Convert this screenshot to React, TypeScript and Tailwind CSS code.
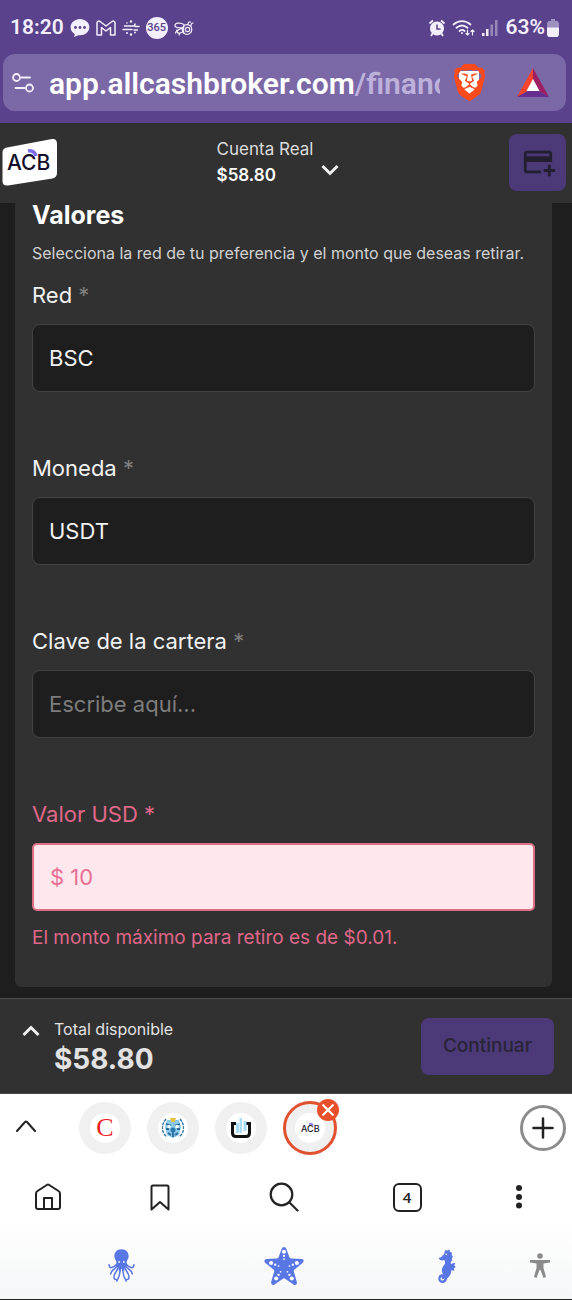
import { useState } from "react";
import type { ReactNode } from "react";
import { MdAddCard } from "react-icons/md";
import { SiBrave } from "react-icons/si";

// Withdrawal form of the broker app, shown inside the mobile browser shell:
// system status bar, address bar, page, tab strip, toolbar, nav bar.

export default function App() {
  return (
    <div className="flex w-full flex-col bg-[#1e1e1e] font-['Inter',sans-serif]">
      <div className="bg-[#5a428c] px-[3px] pb-3">
        <StatusBar />
        <AddressBar />
      </div>
      <AccountHeader />
      <WithdrawForm />
      <TotalBar />
      <div className="border-b border-[#222] bg-gradient-to-b from-white from-60% to-[#f6f7f8]">
        <TabStrip />
        <Toolbar />
        <SystemNav />
      </div>
    </div>
  );
}

function StatusBar() {
  return (
    <div className="flex h-[54px] items-center justify-between pl-[7px] pr-[10px] pt-0.5 font-['Roboto',sans-serif] text-[21px] font-semibold text-[#f4effc]">
      <div className="flex items-center gap-1.5">
        <span>18:20</span>
        <svg viewBox="0 0 20 20" className="size-5">
          <path d="M10 1C4.800 1 .6 4.600.6 9.300c0 3 1.700 5.400 4.200 6.900L4 19l4.300-1.800c5.800.9 11.100-3 11.100-7.900C19.400 4.600 15.200 1 10 1z" fill="currentColor" />
          <g fill="#5a428c">
            <circle cx="5.500" cy="9.500" r="1.400" />
            <circle cx="10" cy="9.500" r="1.400" />
            <circle cx="14.500" cy="9.500" r="1.400" />
          </g>
        </svg>
        <svg viewBox="0 0 20 16" className="h-4 w-5" fill="none" stroke="currentColor" strokeWidth="1.500" strokeLinejoin="round">
          <path d="M1 15V2.500Q2 .2 4 1.500L10 6l6-4.500Q18 .2 19 2.500V15h-4.500V7.500L10 11 5.500 7.500V15z" />
        </svg>
        <svg viewBox="0 0 18 18" className="size-[18px]" fill="none" stroke="currentColor" strokeWidth="1.500" strokeLinecap="round">
          <path d="M2.500 7H11q2 0 2-2M1 10.500h9M13 7.500h4M12 11h3.500" />
          <g fill="currentColor" stroke="none">
            <circle cx="9" cy="2.500" r="1.200" />
            <circle cx="5" cy="4" r=".8" />
            <circle cx="5" cy="14" r="1" />
            <circle cx="9" cy="15.500" r="1.200" />
            <circle cx="13" cy="13.500" r=".9" />
          </g>
        </svg>
        <span className="flex size-[22px] items-center justify-center rounded-full bg-[#f4effc] text-[11px] font-medium text-[#5a428c]">
          365
        </span>
        <svg viewBox="0 0 20 16" className="h-4 w-5" fill="none" stroke="currentColor" strokeWidth="1.200" strokeLinecap="round">
          <path d="M10 4.500C6 2 1 3 1 5.500s4 2.500 8 2M8.500 8c-3 1-6.500 3-5 4.500S8 12.500 9.500 11.500M3 10l-1.500 3M6 13l-1 2" />
          <circle cx="13" cy="9.500" r="4.800" />
          <circle cx="13.500" cy="9.500" r="2.200" />
          <path d="M10 5.500c-1 3-1 5 0 8M14 4.500c0-2 1-3 2.500-2.500M17 6c0-2 .5-3 2-3" />
        </svg>
      </div>
      <div className="flex items-center gap-1.5">
        <svg viewBox="0 0 18 18" className="size-[18px]">
          <circle cx="9" cy="9.500" r="7" fill="currentColor" />
          <path d="M1.500 4.500 5 1.500M16.500 4.500 13 1.500M4.500 14.500 3 17M13.500 14.500 15 17" stroke="currentColor" strokeWidth="1.800" />
          <path d="M9 5.500V10h3.500" fill="none" stroke="#5a428c" strokeWidth="1.500" />
        </svg>
        <svg viewBox="0 0 24 18" className="h-[18px] w-6" fill="none" stroke="currentColor" strokeWidth="1.800" strokeLinecap="round">
          <path d="M1.500 5.500c5-4.600 12-4.600 17 0M4.500 8.800c3.500-3 7.500-3 11 0M7.500 12c2-1.500 3.500-1.500 5 0" />
          <circle cx="10" cy="14" r="1" fill="currentColor" stroke="none" />
          <path d="M15.500 11v5m-1.500-1.500 1.500 1.500 1.500-1.500M20.500 16v-5m-1.500 1.500 1.500-1.500 1.500 1.500" strokeWidth="1.200" />
        </svg>
        <svg viewBox="0 0 16 18" className="h-[18px] w-4" fill="currentColor">
          <rect x="0" y="14" width="2.500" height="3" />
          <rect x="4" y="10" width="2.500" height="7" />
          <rect x="8.500" y="5.500" width="2.500" height="11.500" opacity=".4" />
          <rect x="13" y="1" width="2.500" height="16" opacity=".4" />
        </svg>
        <span className="flex items-center gap-0.5 pl-0.5">
          63%
          <svg viewBox="0 0 12 18" className="h-[18px] w-3" fill="currentColor">
            <path d="M4 0h4v2h2.500L12 4v5H0V4l1.500-2H4z" opacity=".45" />
            <path d="M0 8.500h12V16l-1.500 2h-9L0 16z" />
          </svg>
        </span>
      </div>
    </div>
  );
}

function AddressBar() {
  return (
    <div className="mr-[3px] flex h-[57px] items-center rounded-xl bg-[#7b68a7] pl-[9px] pr-[17px]">
      <button type="button" aria-label="Site settings" className="text-[#f4effc]">
        <svg viewBox="0 0 22 22" className="size-[22px]" fill="none" stroke="currentColor" strokeWidth="1.800" strokeLinecap="round">
          <circle cx="4.500" cy="5.500" r="3.500" />
          <path d="M9.500 5.500H18" />
          <circle cx="17.500" cy="16" r="3.500" />
          <path d="M3.500 16h9" />
        </svg>
      </button>
      <button
        type="button"
        className="ml-[15px] min-w-0 flex-1 overflow-hidden whitespace-nowrap pt-0.5 text-left font-['Roboto',sans-serif] text-[30px] font-semibold leading-10 text-white"
      >
        app.allcashbroker.com<span className="text-[#bdb1dc]">/financ</span>
      </button>
      <button type="button" aria-label="Brave Shields" className="relative ml-[13px] flex h-9 w-8 items-center justify-center">
        <span className="absolute h-6 w-5 rounded-b-full bg-white" />
        <SiBrave className="relative size-[37px] shrink-0 text-[#fb4a1c]" />
      </button>
      <button type="button" aria-label="Brave Rewards" className="ml-8">
        <svg viewBox="0 0 32 29" className="h-[29px] w-8">
          <path d="M16 0 0 29l11-6 5-11z" fill="#f4442e" />
          <path d="M16 0v12l6 11 10 6z" fill="#9e1f63" />
          <path d="M0 29h32l-10-6H11z" fill="#662d91" />
          <path d="M16 11 9.500 23h13z" fill="#fff" />
        </svg>
      </button>
    </div>
  );
}

function AccountHeader() {
  return (
    <header className="grid h-20 grid-cols-[1fr_auto_1fr] items-center bg-[#313131] pb-0.5 pl-0.5 pr-1.5">
      <a href="#" aria-label="ACB">
        <svg viewBox="0 0 56 48" className="h-12 w-14">
          <path d="M5 9.500 50 1q5-.7 5 5v29q0 4.500-4.500 5.400L6 47.500q-5.500.7-5.500-4.500V14.500Q.5 10.300 5 9.500z" fill="#fff" />
          <text x="5" y="32" className="font-['Inter',sans-serif] text-[21px] font-medium" fill="#14102b">ACB</text>
          <path d="M26 13q6-1 8 5" fill="none" stroke="#7b6cf0" strokeWidth="3.500" />
        </svg>
      </a>
      <button type="button" className="flex items-end gap-2 pr-3 text-left">
        <span className="flex flex-col">
          <span className="text-[17px] leading-[26px] text-[#dcdcdc]">Cuenta Real</span>
          <span className="text-[17px] font-semibold leading-[26px] text-white">$58.80</span>
        </span>
        <Chevron className="mb-3" />
      </button>
      <button
        type="button"
        aria-label="Depositar"
        className="flex size-[57px] items-center justify-center justify-self-end rounded-lg bg-[#4c3a78] text-[#231f2e]"
      >
        <MdAddCard className="size-[34px]" />
      </button>
    </header>
  );
}

function Chevron({ className = "" }: { className?: string }) {
  return (
    <svg viewBox="0 0 18 12" className={"h-3 w-[18px] shrink-0 " + className} fill="none" stroke="#f0f0f0" strokeWidth="3">
      <path d="m1.500 2 7.500 7.500L16.500 2" />
    </svg>
  );
}

type FieldProps = {
  id: string;
  label: string;
  value?: string;
  placeholder?: string;
  error?: string;
};

function Field({ id, label, value = "", placeholder, error }: FieldProps) {
  const [text, setText] = useState(value);
  return (
    <div className="flex h-[173px] flex-col">
      <label
        htmlFor={id}
        className={"text-[22px] leading-8 " + (error ? "text-[#e0678a]" : "text-[#f2f2f2]")}
      >
        {label} <span className={error ? "" : "text-[#7f7f7f]"}>*</span>
      </label>
      <input
        id={id}
        type="text"
        value={text}
        placeholder={placeholder}
        onChange={(e) => setText(e.target.value)}
        aria-invalid={!!error}
        aria-describedby={error ? id + "-error" : undefined}
        className={
          "mt-[13px] h-[68px] w-full px-4 text-[22px] outline-none placeholder:text-[#7d7d7d] " +
          (error
            ? "rounded-[5px] border-2 border-[#dc6f83] bg-[#ffe8ed] text-[#e86f92]"
            : "rounded-lg border border-[#434343] bg-[#1e1e1e] text-[#f2f2f2]")
        }
      />
      {error ? (
        <p id={id + "-error"} className="mt-3 text-[19px] leading-[30px] text-[#e0678a]">
          {error}
        </p>
      ) : null}
    </div>
  );
}

function WithdrawForm() {
  return (
    <main className="pb-[11px] pl-[15px] pr-5">
      <form className="rounded-b-md bg-[#313131] px-[17px] pb-4">
        <h1 className="text-[25px] font-bold leading-6 text-white">Valores</h1>
        <p className="mt-[14px] whitespace-nowrap text-[16px] leading-6 text-[#d2d2d2]">
          Selecciona la red de tu preferencia y el monto que deseas retirar.
        </p>
        <div className="mt-[14px]">
          <Field id="red" label="Red" value="BSC" />
          <Field id="moneda" label="Moneda" value="USDT" />
          <Field id="clave" label="Clave de la cartera" placeholder="Escribe aquí..." />
          <Field id="valor" label="Valor USD" value="$ 10" error="El monto máximo para retiro es de $0.01." />
        </div>
      </form>
    </main>
  );
}

function TotalBar() {
  return (
    <footer className="flex h-24 items-center justify-between border-y border-[#4a4a4a] bg-[#313131] pl-[22px] pr-[18px]">
      <button type="button" className="flex items-start gap-[14px] pt-0.5 text-left text-[#e2e2e2]">
        <Chevron className="mt-2 rotate-180" />
        <span className="flex flex-col">
          <span className="text-[16px] leading-6">Total disponible</span>
          <span className="text-[28px] font-bold leading-9">$58.80</span>
        </span>
      </button>
      <button type="button" disabled className="h-[57px] rounded-lg bg-[#4c3a78] px-[22px] text-[19px] font-medium text-[#2a2438]">
        Continuar
      </button>
    </footer>
  );
}

function Tab({ label, children }: { label: string; children: ReactNode }) {
  return (
    <button type="button" aria-label={label} className="flex size-[52px] items-center justify-center rounded-full bg-[#f1f0f1]">
      <span className="flex size-[30px] items-center justify-center rounded-full bg-white">{children}</span>
    </button>
  );
}

function TabStrip() {
  return (
    <div className="flex h-[68px] items-center pl-4 pr-1.5">
      <button type="button" aria-label="Expand tabs" className="mr-[43px] pb-1">
        <svg viewBox="0 0 20 12" className="h-3 w-5" fill="none" stroke="#222" strokeWidth="2" strokeLinecap="round" strokeLinejoin="round">
          <path d="m1 11 8-9q1-1 2 0l8 9" />
        </svg>
      </button>
      <div className="flex items-center gap-4">
        <Tab label="Tab 1">
          <span className="font-['Liberation_Serif',serif] text-[26px] leading-none text-[#ef1c24]">C</span>
        </Tab>
        <Tab label="Tab 2">
          <svg viewBox="0 0 22 22" className="size-[22px]">
            <path d="M4 2C-1 8-1 15 5 20M18 2c5 6 5 13-1 18" fill="none" stroke="#3b7ba8" strokeWidth="1.500" strokeDasharray="3 1" />
            <path d="M5 3h12l2 7-2 8-6 3-6-3-2-8z" fill="#8cc8e8" />
            <path d="M8 1h6l-1.500 4h-3z" fill="#e3c23c" />
            <path d="M4 7l5 1.500M18 7l-5 1.500M4 12h3M15 12h3M6 16l3 2M16 16l-3 2M11 15v5" stroke="#266a9c" strokeWidth="1.800" />
            <circle cx="7" cy="9.500" r="1.800" fill="#f2fbff" />
            <circle cx="15" cy="9.500" r="1.800" fill="#f2fbff" />
            <circle cx="11" cy="13" r="2.500" fill="#2c78ac" />
          </svg>
        </Tab>
        <Tab label="Tab 3">
          <svg viewBox="0 0 22 22" className="size-[22px]">
            <path d="M6 6.500H2.500V16q0 3.500 3.500 3.500h10q3.500 0 3.500-3.500V6.500H16" fill="none" stroke="#111" strokeWidth="3" />
            <path d="M6 6h3v10H6zM9.500 1h2.500v15H9.500zM13.500 4h3v10h-3z" fill="#a9dcf5" />
          </svg>
        </Tab>
        <div className="relative">
          <button
            type="button"
            aria-label="AllCashBroker"
            className="flex size-[54px] items-center justify-center rounded-full border-[3px] border-[#e0512f] bg-[#f1f0f1]"
          >
            <span className="flex size-[30px] items-center justify-center rounded-full bg-white">
              <svg viewBox="0 0 20 14" className="h-3.5 w-5">
                <text x="1" y="11" className="font-['Inter',sans-serif] text-[9px] font-medium" fill="#17132b">ACB</text>
                <path d="M9 3q3-1 4 1.500" fill="none" stroke="#7b6cf0" strokeWidth="1.500" />
              </svg>
            </span>
          </button>
          <button
            type="button"
            aria-label="Close tab"
            className="absolute -right-0.5 -top-0.5 flex size-[22px] items-center justify-center rounded-full bg-[#e8502b]"
          >
            <svg viewBox="0 0 10 10" className="size-3" stroke="#fff" strokeWidth="1.800" strokeLinecap="round">
              <path d="m1 1 8 8M9 1 1 9" />
            </svg>
          </button>
        </div>
      </div>
      <button
        type="button"
        aria-label="New tab"
        className="ml-auto flex size-[46px] items-center justify-center rounded-full border-[3px] border-[#8c8c8c]"
      >
        <svg viewBox="0 0 22 22" className="size-[22px]" stroke="#222" strokeWidth="2.500" strokeLinecap="round">
          <path d="M11 1.500v19M1.500 11h19" />
        </svg>
      </button>
    </div>
  );
}

function Toolbar() {
  return (
    <nav className="grid h-[70px] grid-cols-[96fr_128fr_120fr_126fr_98fr] items-center justify-items-center pr-1 text-[#222]">
      <button type="button" aria-label="Home">
        <svg viewBox="0 0 28 28" className="size-7" fill="none" stroke="currentColor" strokeWidth="2" strokeLinejoin="round">
          <path d="M2 10.500Q2 9 3.500 8L12.800 2q1.200-.8 2.400 0l9.300 6Q26 9 26 10.500V24q0 2-2 2H4q-2 0-2-2z" />
          <path d="M10 26V15h8v11" />
        </svg>
      </button>
      <button type="button" aria-label="Bookmarks">
        <svg viewBox="0 0 20 27" className="h-[27px] w-5" fill="none" stroke="currentColor" strokeWidth="2" strokeLinejoin="round">
          <path d="M1.500 3q0-1.500 1.500-1.500h14q1.500 0 1.500 1.500v22.500L10 18l-8.500 7.500z" />
        </svg>
      </button>
      <button type="button" aria-label="Search">
        <svg viewBox="0 0 30 30" className="size-[30px]" fill="none" stroke="currentColor" strokeWidth="2.200" strokeLinecap="round">
          <circle cx="12.500" cy="12.500" r="10.800" />
          <path d="m20.500 20.500 8 8" />
        </svg>
      </button>
      <button
        type="button"
        aria-label="4 open tabs"
        className="flex size-[29px] items-center justify-center rounded-md border-2 border-[#222] font-['Open_Sans',sans-serif] text-[15px] font-semibold leading-none"
      >
        4
      </button>
      <button type="button" aria-label="Menu">
        <svg viewBox="0 0 6 24" className="h-6 w-1.5" fill="currentColor">
          <circle cx="3" cy="3" r="3" />
          <circle cx="3" cy="12" r="3" />
          <circle cx="3" cy="20.500" r="3" />
        </svg>
      </button>
    </nav>
  );
}

function SystemNav() {
  return (
    <nav className="flex h-[67px] items-center pl-10 pr-5 text-[#5876e4]">
      <button type="button" aria-label="Recents" className="flex flex-1 justify-center">
        <svg viewBox="0 0 80 100" className="h-[34px] w-[27px]" fill="none" stroke="currentColor" strokeWidth="4.500" strokeLinecap="round">
          <path d="M40 0c14 0 22 10 21 22 0 8-5 11-6 17l2 14H23l2-14c-1-6-6-9-6-17C18 10 26 0 40 0z" fill="currentColor" stroke="none" />
          <path d="M27 44C14 56 5 60 3 46M29 48C18 64 8 62 8 74M32 50c-4 16-16 22-14 34 0 4 3 6 6 6M36 50c2 20-2 32-10 45" />
          <path d="M53 44c13 12 22 16 24 2M51 48c11 16 21 14 21 26M48 50c4 16 16 22 14 34 0 4-3 6-6 6M44 50c-2 20 2 32 10 45" />
          <path d="M30 44h20l-2 22-8-8-8 8z" fill="currentColor" stroke="none" />
          <circle cx="33" cy="38" r="2.500" fill="#fff" stroke="none" />
          <circle cx="47" cy="38" r="2.500" fill="#fff" stroke="none" />
        </svg>
      </button>
      <button type="button" aria-label="Home screen" className="flex flex-1 justify-center">
        <svg viewBox="0 0 118 116" className="size-10">
          <path
            d="M59 2q5 0 7 6l9 24q2 4 6 4l30 1q7 1 6 6t-6 8L90 68q-3 2-2 6l9 32q1 7-4 8t-9-4L63 96q-4-3-8 0l-21 14q-5 5-9 4t-4-8l9-32q1-4-2-6L7 51q-6-3-6-8t6-6l30-1q4 0 6-4l9-24q2-6 7-6z"
            fill="currentColor"
          />
          <g fill="#fff">
            <circle cx="59" cy="16" r="6" />
            <circle cx="59" cy="28" r="3.500" />
            <circle cx="59" cy="38" r="2.500" />
            <circle cx="21" cy="49" r="6" />
            <circle cx="33" cy="54" r="3.500" />
            <circle cx="43" cy="58" r="2.500" />
            <circle cx="97" cy="49" r="6" />
            <circle cx="85" cy="54" r="3.500" />
            <circle cx="75" cy="58" r="2.500" />
            <circle cx="36" cy="95" r="6" />
            <circle cx="43" cy="84" r="3.500" />
            <circle cx="49" cy="75" r="2.500" />
            <circle cx="82" cy="95" r="6" />
            <circle cx="75" cy="84" r="3.500" />
            <circle cx="69" cy="75" r="2.500" />
          </g>
        </svg>
      </button>
      <button type="button" aria-label="Back" className="flex flex-1 justify-center">
        <svg viewBox="0 0 54 102" className="h-[34px] w-[18px]" fill="currentColor">
          <path d="M20 8l3-6 5 3 6-4 2 7 6 3-1 7 4 5-4 5 2 6-5 5 1 7c5-4 7-4 13-4l-3 7 4 5-5 4 1 7-9-1c0 12-6 18-12 24-2 10-8 15-16 14C4 101 0 94 1 86c1-7 6-11 12-10 5 1 8 5 7 10-1 4-5 6-8 3l-1-4c-3 0-4 3-3 6 2 5 8 5 11 0 4-7-5-14-7-23-2-10 4-17 8-22 2-4 1-8-1-13-5 2-9 2-14-1l-3-5 7-2c4-2 5-7 9-9z" />
          <circle cx="25" cy="16" r="2.500" fill="#fff" />
        </svg>
      </button>
      <button type="button" aria-label="Accessibility" className="flex w-6 justify-center text-[#8b8b8b]">
        <svg viewBox="0 0 20 25" className="h-[25px] w-5" fill="currentColor">
          <circle cx="10" cy="3" r="2.800" />
          <path d="M0 7h20v2.500l-6.500 1V15L16 24l-2.500 1L10.500 17h-1L6.500 25 4 24l2.500-9v-4.500L0 9.500z" />
        </svg>
      </button>
    </nav>
  );
}
